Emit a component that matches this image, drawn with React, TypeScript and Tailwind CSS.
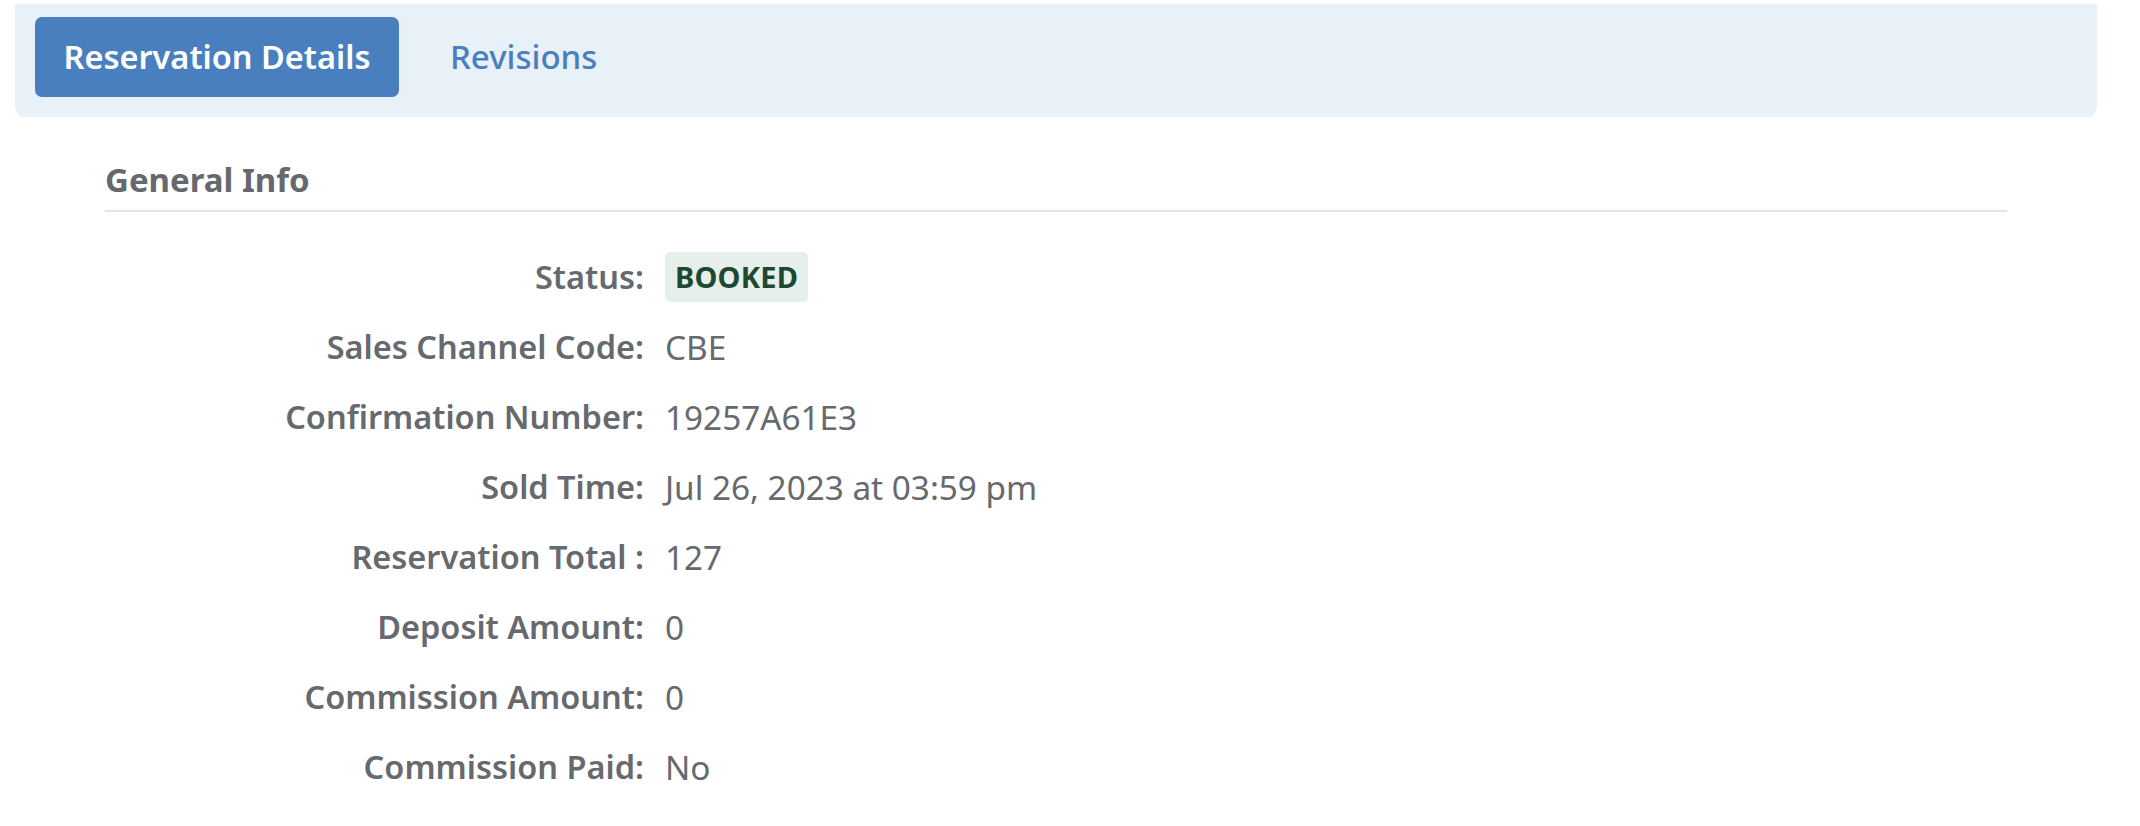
import React from "react";

const rows: { label: string; value: React.ReactNode }[] = [
  {
    label: "Status:",
    value: (
      <span className="inline-flex h-[50px] items-center rounded-[5px] bg-[#e6efea] px-[10px] text-[29px] font-bold tracking-[0.2px] text-[#1e4832]">
        BOOKED
      </span>
    ),
  },
  { label: "Sales Channel Code:", value: "CBE" },
  { label: "Confirmation Number:", value: "19257A61E3" },
  { label: "Sold Time:", value: "Jul 26, 2023 at 03:59 pm" },
  { label: "Reservation Total :", value: "127" },
  { label: "Deposit Amount:", value: "0" },
  { label: "Commission Amount:", value: "0" },
  { label: "Commission Paid:", value: "No" },
];

export default function App() {
  return (
    <div
      className="min-h-[826px] w-[2140px] bg-white text-[#66696e]"
      style={{ fontFamily: '"Noto Sans", "Open Sans", sans-serif' }}
    >
      <div className="pt-[4px]">
        <div className="ml-[15px] flex w-[2082px] items-center gap-[20px] rounded-b-[10px] bg-[#e8f0f8] pb-[20px] pl-[20px] pt-[13px]">
          <button className="flex h-[80px] w-[364px] items-center justify-center rounded-[7px] bg-[#4a7fbf] text-[32.5px] font-semibold text-white">
            Reservation Details
          </button>
          <button className="flex h-[80px] items-center px-[31px] text-[33px] font-medium text-[#4a7fbf]">
            Revisions
          </button>
        </div>
      </div>

      <div className="ml-[105px] mt-[41px] w-[1902px]">
        <div className="border-b-2 border-[#e4e4e4] pb-[8px]">
          <h2 className="text-[33px] font-bold leading-[44px] text-[#65686d]">General Info</h2>
        </div>

        <div className="mt-[30px] flex flex-col">
          {rows.map((r) => (
            <div key={r.label} className="flex h-[70px] items-center">
              <div className="w-[539px] text-right text-[32.5px] font-semibold leading-[44px]">{r.label}</div>
              <div className="pl-[21px] text-[33.3px] font-normal leading-[44px]">{r.value}</div>
            </div>
          ))}
        </div>
      </div>
    </div>
  );
}
